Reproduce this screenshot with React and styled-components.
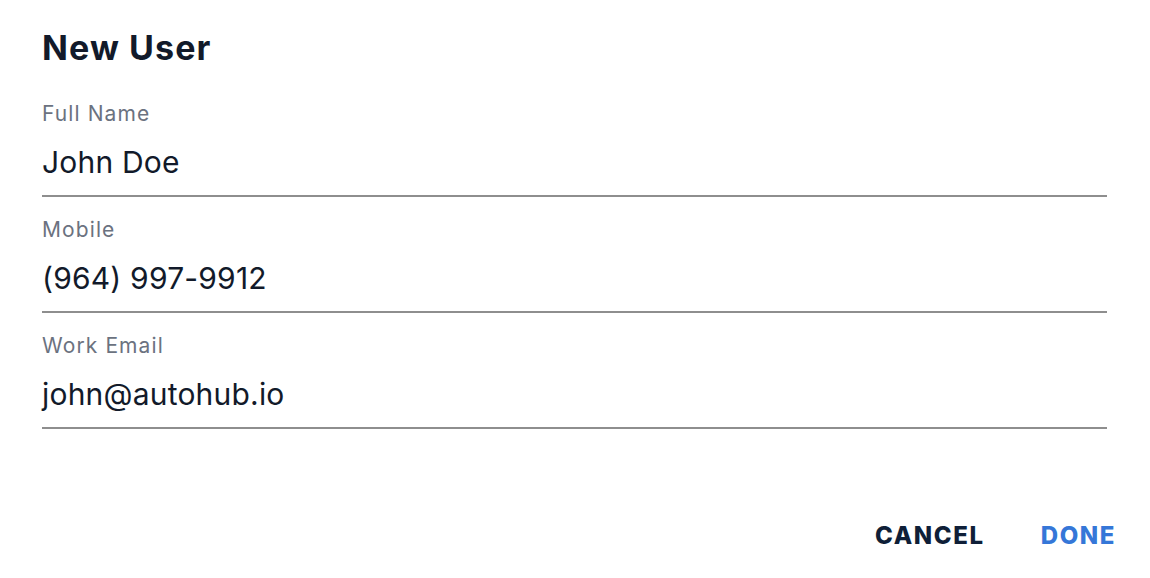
import React from "react";
import styled, { createGlobalStyle } from "styled-components";

const Global = createGlobalStyle`
  html, body { margin: 0; padding: 0; background: #ffffff; }
  body { font-family: "Inter", "Noto Sans", sans-serif; }
`;

const Dialog = styled.div`
  box-sizing: border-box;
  width: 1150px;
  height: 578px;
  padding: 28px 43px 0 42px;
  display: flex;
  flex-direction: column;
`;

const Title = styled.h1`
  margin: 0 0 13px;
  font-size: 34px;
  line-height: 40px;
  font-weight: 700;
  letter-spacing: 1.1px;
  color: #121a2a;
`;

const Field = styled.div`
  display: flex;
  flex-direction: column;
  padding: 21px 0 15px;
  border-bottom: 2px solid #8e8e8e;
`;

const Label = styled.label`
  font-size: 21px;
  line-height: 24px;
  letter-spacing: 1.1px;
  color: #6b7280;
`;

const Value = styled.div`
  margin-top: 18px;
  font-size: 30px;
  line-height: 36px;
  letter-spacing: 0.2px;
  color: #121a2a;
`;

const Actions = styled.div`
  margin-top: 93px;
  margin-right: -9px;
  display: flex;
  justify-content: flex-end;
  gap: 56px;
`;

const Button = styled.button`
  border: 0;
  background: none;
  padding: 0;
  font-family: inherit;
  font-size: 24px;
  line-height: 28px;
  font-weight: 800;
  letter-spacing: 1.6px;
  color: ${(p) => (p.$primary ? "#3577d8" : "#0f1f38")};
  cursor: pointer;
`;

const fields = [
  { label: "Full Name", value: "John Doe" },
  { label: "Mobile", value: "(964) 997-9912" },
  { label: "Work Email", value: "john@autohub.io" },
];

export default function App() {
  return (
    <>
      <Global />
      <Dialog>
        <Title>New User</Title>
        {fields.map((f) => (
          <Field key={f.label}>
            <Label>{f.label}</Label>
            <Value>{f.value}</Value>
          </Field>
        ))}
        <Actions>
          <Button>CANCEL</Button>
          <Button $primary>DONE</Button>
        </Actions>
      </Dialog>
    </>
  );
}
